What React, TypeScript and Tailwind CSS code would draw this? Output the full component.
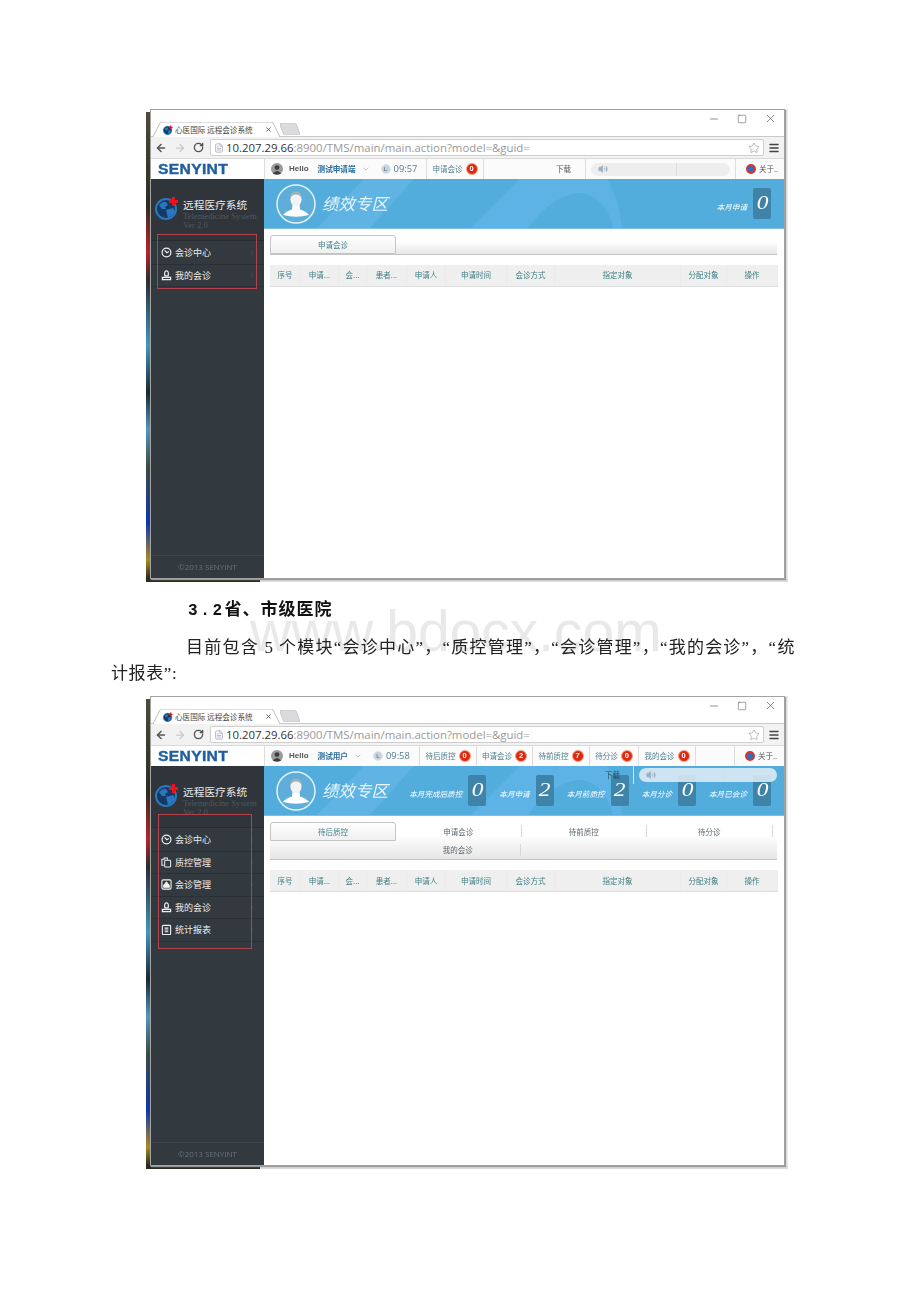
import React from "react";
import { ArrowLeft, ArrowRight, ChevronDown, ChevronRight, FileText, Menu, Minus, RotateCw, Square, Star, Volume2, X } from "lucide-react";

const cjk = "font-['Noto_Sans_CJK_SC','Liberation_Sans',sans-serif]";

const columns = [
  { label: "序号", w: "w-[31px]" },
  { label: "申请...", w: "w-[38px]" },
  { label: "会...", w: "w-[28px]" },
  { label: "患者...", w: "w-[40px]" },
  { label: "申请人", w: "w-[39px]" },
  { label: "申请时间", w: "w-[61px]" },
  { label: "会诊方式", w: "w-[48px]" },
  { label: "指定对象", w: "w-[126px]" },
  { label: "分配对象", w: "w-[46px]" },
  { label: "操作", w: "w-[51px]" },
];

function GlobeLogo({ size }: { size: number }) {
  return (
    <svg width={size} height={size} viewBox="0 0 24 24" className="shrink-0">
      <circle cx="11" cy="13" r="10" fill="#123a63" stroke="#2b76bd" strokeWidth="2" />
      <path d="M4 9 Q8 5 11 6 L13 9 L10 11 L11 13 L7 13 Z" fill="#2b76bd" />
      <path d="M11 14 L18 12 L20 15 Q18 20 13 22 L12 18 Z" fill="#2b76bd" />
      <path d="M17 1 h3 v3 h3 v3 h-3 v3 h-3 v-3 h-3 v-3 h3 z" fill="#e8141c" />
    </svg>
  );
}

function NavIcon({ name }: { name: string }) {
  if (name === "会诊中心")
    return (
      <svg width="11" height="11" viewBox="0 0 12 12" fill="none" stroke="#f1f1f1" strokeWidth="1.3">
        <circle cx="6" cy="6" r="4.8" />
        <path d="M4 3.6 L6.4 6.2 L8.6 5" />
      </svg>
    );
  if (name === "质控管理")
    return (
      <svg width="11" height="11" viewBox="0 0 12 12" fill="none" stroke="#f1f1f1" strokeWidth="1.1">
        <path d="M3 9 H1 V2.5 H3.5 V1 H7 V3" />
        <rect x="4" y="3.5" width="6.5" height="7.5" rx="1" />
      </svg>
    );
  if (name === "会诊管理")
    return (
      <svg width="11" height="11" viewBox="0 0 12 12" fill="none" stroke="#f1f1f1" strokeWidth="1.2">
        <rect x="1" y="1" width="10" height="10" rx="1.5" />
        <path d="M3 7 L6 3.5 L9 7 V9 H3 Z" fill="#f1f1f1" />
      </svg>
    );
  if (name === "我的会诊")
    return (
      <svg width="11" height="11" viewBox="0 0 12 12" fill="none" stroke="#f1f1f1" strokeWidth="1.3">
        <path d="M4.2 6.5 Q3.2 1 6 1 Q8.8 1 7.8 6.5 Z" />
        <path d="M1.5 8 H10.5 V10.6 H1.5 Z" />
      </svg>
    );
  return (
    <svg width="11" height="11" viewBox="0 0 12 12" fill="none" stroke="#f1f1f1" strokeWidth="1.2">
      <rect x="1.5" y="1.5" width="9" height="10" rx="1" />
      <path d="M4 4.5 H8 M4 6.5 H8 M4 8.5 H8" />
    </svg>
  );
}

function Sidebar({ items }: { items: string[] }) {
  return (
    <aside className="w-[113px] shrink-0 flex flex-col bg-[#32393f]">
      <div className="h-[20px] shrink-0 bg-white flex items-center pl-[7px]">
        <span className="font-['Liberation_Sans',sans-serif] font-bold text-[14.5px] leading-none text-[#1f5f9f] [-webkit-text-stroke:0.4px_#1f5f9f] tracking-[0.3px] scale-x-[1.08] origin-left">
          SENYINT
        </span>
      </div>
      <div className="h-[61px] shrink-0 bg-[#2f353a] flex items-start pl-[4px] pt-[17px] gap-[4px]">
        <GlobeLogo size={24} />
        <div className="min-w-0 pt-[2px]">
          <div className={`${cjk} text-[10.7px] leading-[14px] text-[#e8e8e8] whitespace-nowrap`}>远程医疗系统</div>
          <div className="font-['Liberation_Serif',serif] text-[8.6px] leading-[9px] text-[#50575d] whitespace-nowrap">
            Telemedicine System
          </div>
          <div className="font-['Liberation_Serif',serif] text-[8.6px] leading-[9px] text-[#50575d]">Ver 2.0</div>
        </div>
      </div>
      <nav className="border-t border-[#262b2f] pt-px">
        {items.map((item) => (
          <div
            key={item}
            className="h-[22.5px] flex items-center pl-[10px] pr-[8px] gap-[3px] border-b border-[#2a3035]"
          >
            <NavIcon name={item} />
            <span className={`${cjk} text-[9px] text-[#ededed] flex-1 whitespace-nowrap`}>{item}</span>
            <ChevronRight size={8} className="text-[#4a5259]" />
          </div>
        ))}
      </nav>
      <div className="mt-auto h-[23px] border-t border-[#3d444a] flex items-center justify-center font-['Open_Sans',sans-serif] text-[8px] text-[#69717a]">
        ©2013 SENYINT
      </div>
    </aside>
  );
}

function Badge({ count }: { count: number }) {
  return (
    <span className="w-[12px] h-[12px] rounded-full bg-[#e0280f] border border-[#f4a08a] flex items-center justify-center font-['Liberation_Sans',sans-serif] font-bold text-[7.5px] leading-none text-white shrink-0">
      {count}
    </span>
  );
}

function TopBar({
  name,
  time,
  userWidth,
  alerts,
  showDownload,
}: {
  name: string;
  time: string;
  userWidth: string;
  alerts: { label: string; count: number; w: string }[];
  showDownload: boolean;
}) {
  return (
    <div className="h-[20px] shrink-0 flex bg-[#fbfbfb] border-l border-[#ddd]">
      <div className={`${userWidth} shrink-0 flex items-center pl-[6px] border-r border-[#ddd]`}>
        <svg width="12" height="12" viewBox="0 0 12 12" className="shrink-0">
          <circle cx="6" cy="6" r="6" fill="#9a9a9a" />
          <circle cx="6" cy="4.6" r="2.4" fill="#3d3d3d" />
          <path d="M1.8 10.5 Q6 5.5 10.2 10.5 Q6 12.6 1.8 10.5 Z" fill="#3d3d3d" />
        </svg>
        <span className="ml-[6px] font-['Liberation_Sans',sans-serif] font-bold text-[8px] text-[#555]">Hello</span>
        <span className={`${cjk} ml-[9px] font-bold text-[7.6px] text-[#2a6c9e] whitespace-nowrap`}>{name}</span>
        <ChevronDown size={8} className="ml-[6px] text-[#aaa]" />
        <span className="ml-[11px] w-[10px] h-[10px] rounded-full bg-[#c7d3df] border border-[#dfe6ec] flex items-center justify-center font-['Liberation_Sans',sans-serif] text-[6px] text-[#567]">
          L
        </span>
        <span className="ml-[3px] font-['Open_Sans',sans-serif] text-[9.4px] text-[#557a8c]">{time}</span>
      </div>
      {alerts.map((a) => (
        <div key={a.label} className={`${a.w} shrink-0 flex items-center justify-center gap-[3px] border-r border-[#ddd]`}>
          <span className={`${cjk} text-[7.5px] text-[#4f8190] whitespace-nowrap`}>{a.label}</span>
          <Badge count={a.count} />
        </div>
      ))}
      {showDownload ? (
        <>
          <div className={`${cjk} w-[102px] shrink-0 flex items-center justify-end pr-[14px] border-r border-[#ddd] text-[7.5px] text-[#555]`}>
            下载
          </div>
          <div className="w-[150px] shrink-0 flex items-center pl-[5px] border-r border-[#ddd]">
            <div className="w-[139px] h-[13px] rounded-full bg-[#eeeeee] flex items-center pl-[7px]">
              <Volume2 size={10} className="text-[#9db2c4] fill-[#9db2c4]" />
              <div className="ml-[68px] w-px h-full bg-[#dddddd]" />
            </div>
          </div>
        </>
      ) : (
        <div className="flex-1 border-r border-[#ddd]" />
      )}
      <div className="w-[49px] shrink-0 flex items-center pl-[10px] gap-[3px]">
        <span className="w-[10px] h-[10px] rounded-full bg-[#2f6fc2] border-2 border-[#d8342b] shrink-0" />
        <span className={`${cjk} text-[7.5px] text-[#555] whitespace-nowrap`}>关于..</span>
      </div>
    </div>
  );
}

function Stat({ label, value }: { label: string; value: number }) {
  return (
    <div className="flex items-center gap-[6px]">
      <span className={`${cjk} italic text-[7.6px] text-white whitespace-nowrap pt-[6px]`}>{label}</span>
      <span className="w-[18px] h-[31px] rounded-[2px] bg-[#3f84a8] flex items-center justify-center font-['Liberation_Serif',serif] italic text-[18px] text-white">
        <span className="inline-block scale-x-[1.3]">{value}</span>
      </span>
    </div>
  );
}

function Banner({ stats, overlay }: { stats: { label: string; value: number }[]; overlay: boolean }) {
  return (
    <div className="relative h-[50px] shrink-0 bg-[#52acdc] border-b border-[#7cc0e6] flex items-center pl-[12px] pr-[13px] overflow-hidden">
      <svg className="absolute inset-0" width="520" height="50" viewBox="0 0 520 50">
        <path d="M52 50 L100 0 L150 0 L105 50 Z" fill="#5fb4e4" />
        <path d="M256 0 L343 0 Q356 21 358 50 L349 50 Q344 21 319 14 Q291 13 263 50 L206 50 Z" fill="#5db3e5" />
      </svg>
      <svg width="40" height="40" viewBox="0 0 40 40" className="relative shrink-0">
        <circle cx="20" cy="20" r="19" fill="#5eaed9" stroke="#e4f3fb" strokeWidth="1.5" />
        <path d="M7 31 Q10 27 16 25.5 L16.5 21 H23.5 L24 25.5 Q30 27 33 31 Q20 34.5 7 31 Z" fill="#ffffff" />
        <ellipse cx="20" cy="15.5" rx="5.6" ry="7.2" fill="#f3f3f3" />
        <path d="M14.2 15 Q13.6 7.5 20 7.5 Q26.4 7.5 25.8 15 Q24.5 10.5 20 10.5 Q15.5 10.5 14.2 15 Z" fill="#9fb1ba" />
      </svg>
      <span className={`${cjk} relative ml-[6px] italic text-[16.5px] text-[#e9f6fd] whitespace-nowrap`}>绩效专区</span>
      <div className="relative ml-auto flex items-center gap-[13px]">
        {stats.map((s) => (
          <Stat key={s.label} label={s.label} value={s.value} />
        ))}
      </div>
      {overlay && (
        <div className="absolute left-[341px] top-0 h-[18px] flex items-start">
          <span className={`${cjk} text-[7.5px] leading-[16px] text-[#2c4a5c] pt-px`}>下载</span>
          <span className="ml-[13px] w-px h-[18px] bg-[#cfe6f3]" />
          <div className="ml-[5px] mt-[2px] w-[138px] h-[14px] rounded-full bg-[#e3eff6]/85 flex items-center pl-[7px]">
            <Volume2 size={10} className="text-[#9db2c4] fill-[#9db2c4]" />
            <div className="ml-[68px] w-px h-full bg-[#cfdfe9]" />
          </div>
        </div>
      )}
    </div>
  );
}

function Tabs({ rows }: { rows: string[][] }) {
  return (
    <div className="w-[507px] border-b border-[#c6c6c6] rounded-t-[2px] bg-[linear-gradient(#ffffff,#ffffff_35%,#e6e6e6)]">
      {rows.map((row, i) => (
        <div key={i} className="flex h-[18.5px]">
          {row.map((tab, j) => {
            const active = i === 0 && j === 0;
            if (active)
              return (
                <div
                  key={tab}
                  className={`${cjk} w-[126px] flex items-center justify-center text-[7.5px] whitespace-nowrap text-[#3f7f8a] border border-[#c4c4c4] rounded-t-[3px] bg-[linear-gradient(#ffffff,#f0f0f0)]`}
                >
                  {tab}
                </div>
              );
            return (
              <div key={tab || j} className={`${cjk} w-[125.5px] flex items-center text-[7.5px] whitespace-nowrap text-[#5a6a70]`}>
                <span className="flex-1 text-center">{tab}</span>
                {tab && <span className="w-px h-[12px] bg-[#d8d8d8]" />}
              </div>
            );
          })}
        </div>
      ))}
    </div>
  );
}

function Content({ rows }: { rows: string[][] }) {
  return (
    <div className="flex-1 bg-white pt-[6px] pl-[6px]">
      <Tabs rows={rows} />
      <div className="mt-[10px] h-[22px] w-[508px] flex bg-[#efefef] border-b border-[#dedede]">
        {columns.map((c) => (
          <div key={c.label} className={`${cjk} ${c.w} flex items-center justify-center text-[7.5px] text-[#3f7f85] border-r border-[#ebebeb] whitespace-nowrap`}>
            {c.label}
          </div>
        ))}
      </div>
    </div>
  );
}

function BrowserChrome() {
  return (
    <>
      <div className="relative h-[27px] shrink-0 bg-white border-b border-[#c9c9c9] flex items-end pl-[2px]">
        <div className="relative w-[127px] h-[15px] -mb-px flex items-center pl-[10px]">
          <svg className="absolute inset-0" width="127" height="15" viewBox="0 0 127 15">
            <path d="M0 15 L7 1 Q7.5 0 9 0 L117 0 Q119 0 120 1 L127 15" fill="#ffffff" stroke="#bdbdbd" />
          </svg>
          <span className="relative"><GlobeLogo size={10} /></span>
          <span className={`${cjk} relative ml-[2px] text-[7.6px] text-[#444] whitespace-nowrap`}>心医国际 远程会诊系统</span>
          <X size={7} strokeWidth={3} className="relative ml-[12px] text-[#555]" />
        </div>
        <svg width="20" height="12" viewBox="0 0 20 12" className="mb-[1px]">
          <path d="M0 0 H14 Q16 0 17 3 L20 12 H4 L0 2 Z" fill="#d9dbde" stroke="#c8c8c8" />
        </svg>
        <div className="absolute right-[7px] top-0 h-[17px] flex items-center gap-[17px] text-[#444]">
          <Minus size={12} strokeWidth={1.2} />
          <Square size={10} strokeWidth={1.2} />
          <X size={13} strokeWidth={1.2} />
        </div>
      </div>
      <div className="h-[22px] shrink-0 bg-[#f2f2f2] flex items-center pl-[4px] pr-[4px] border-b border-[#dadada]">
        <ArrowLeft size={12} strokeWidth={3} className="text-[#555]" />
        <ArrowRight size={12} strokeWidth={2.5} className="ml-[7px] text-[#c9c9c9]" />
        <RotateCw size={11} strokeWidth={3} className="ml-[7px] text-[#555]" />
        <div className="ml-[6px] h-[17px] flex-1 flex items-center bg-white border border-[#cfcfcf] rounded-[2px] pl-[3px] pr-[3px]">
          <FileText size={10} className="text-[#aab]" />
          <span className="ml-[2px] font-['Open_Sans',sans-serif] text-[11.4px] whitespace-nowrap text-[#999]">
            <span className="text-[#333]">10.207.29.66</span>:8900/TMS/main/main.action?model=&amp;guid=
          </span>
          <Star size={12} strokeWidth={1} className="ml-auto text-[#777]" />
        </div>
        <Menu size={12} strokeWidth={3} className="ml-[4px] text-[#444]" />
      </div>
    </>
  );
}

function Shot({
  items,
  name,
  time,
  userWidth,
  alerts,
  showDownload,
  stats,
  tabs,
  box,
}: {
  items: string[];
  name: string;
  time: string;
  userWidth: string;
  alerts: { label: string; count: number; w: string }[];
  showDownload: boolean;
  stats: { label: string; value: number }[];
  tabs: string[][];
  box: string;
}) {
  return (
    <div className="relative ml-[146px] w-[642px] h-[473px] flex flex-col">
      <div className="flex h-[470px]">
        <div className="w-[4px] pt-[3px]">
          <div className="h-full bg-[linear-gradient(#4c4c38,#2c2c22_20%,#6a2a25_24%,#b8242a_30%,#2c2c30_36%,#4396be_50%,#1c2730_60%,#5295c0_68%,#3c4a40_76%,#1036b0_88%,#a88a22_96%,#26261e)] blur-[0.5px]" />
        </div>
        <div className="w-[635px] flex flex-col border border-[#a2a2a2] shadow-[1px_1px_1px_#999] bg-white blur-[0.3px]">
          <BrowserChrome />
          <div className="flex-1 flex min-h-0">
            <Sidebar items={items} />
            <div className="flex-1 flex flex-col min-w-0">
              <TopBar name={name} time={time} userWidth={userWidth} alerts={alerts} showDownload={showDownload} />
              <Banner stats={stats} overlay={!showDownload} />
              <Content rows={tabs} />
            </div>
          </div>
        </div>
        <div className="w-[3px] bg-[#ebebeb]" />
      </div>
      <div className="h-[3px] flex">
        <div className="w-[114px] bg-[#2c2c22]" />
        <div className="flex-1 bg-[#dcdcdc]" />
      </div>
      <div className={`absolute border border-[#b5414a] ${box}`} />
    </div>
  );
}

export default function App() {
  return (
    <div className="w-[920px] h-[1302px] bg-white overflow-hidden pt-[109px]">
      <Shot
        items={["会诊中心", "我的会诊"]}
        name="测试申请端"
        time="09:57"
        userWidth="w-[162px]"
        alerts={[{ label: "申请会诊", count: 0, w: "w-[57px]" }]}
        showDownload
        stats={[{ label: "本月申请", value: 0 }]}
        tabs={[["申请会诊"]]}
        box="left-[11px] top-[125px] w-[100px] h-[55px]"
      />
      <section className="relative h-[114px]">
        <div className="absolute left-[250px] top-[21px] font-['Liberation_Sans',sans-serif] text-[57px] leading-[57px] text-[#e9e9e9] whitespace-nowrap">
          www.bdocx.com
        </div>
        <h2 className={`${cjk} relative pl-[188px] pt-[15px] font-bold text-[17px] leading-[22px] text-[#111] tracking-[1px]`}>
          <span className="font-['Liberation_Mono',monospace] text-[16px] tracking-[2.6px]">3.2</span>省、市级医院
        </h2>
        <p className="relative mt-[13px] ml-[111px] w-[684px] font-['Liberation_Serif','Noto_Sans_CJK_SC',serif] text-[17px] tracking-[0.6px] leading-[26px] text-[#222]">
          <span className="block pl-[75px] whitespace-nowrap [text-align-last:justify]">
            目前包含 5 个模块“会诊中心”，“质控管理”，“会诊管理”，“我的会诊”，“统
          </span>
          <span className="block">计报表”:</span>
        </p>
      </section>
      <Shot
        items={["会诊中心", "质控管理", "会诊管理", "我的会诊", "统计报表"]}
        name="测试用户"
        time="09:58"
        userWidth="w-[155px]"
        alerts={[
          { label: "待后质控", count: 0, w: "w-[57px]" },
          { label: "申请会诊", count: 2, w: "w-[56px]" },
          { label: "待前质控", count: 7, w: "w-[57px]" },
          { label: "待分诊", count: 0, w: "w-[49px]" },
          { label: "我的会诊", count: 0, w: "w-[57px]" },
        ]}
        showDownload={false}
        stats={[
          { label: "本月完成后质控", value: 0 },
          { label: "本月申请", value: 2 },
          { label: "本月前质控", value: 2 },
          { label: "本月分诊", value: 0 },
          { label: "本月已会诊", value: 0 },
        ]}
        tabs={[
          ["待后质控", "申请会诊", "待前质控", "待分诊"],
          ["", "我的会诊"],
        ]}
        box="left-[12px] top-[118px] w-[94px] h-[135px]"
      />
    </div>
  );
}
